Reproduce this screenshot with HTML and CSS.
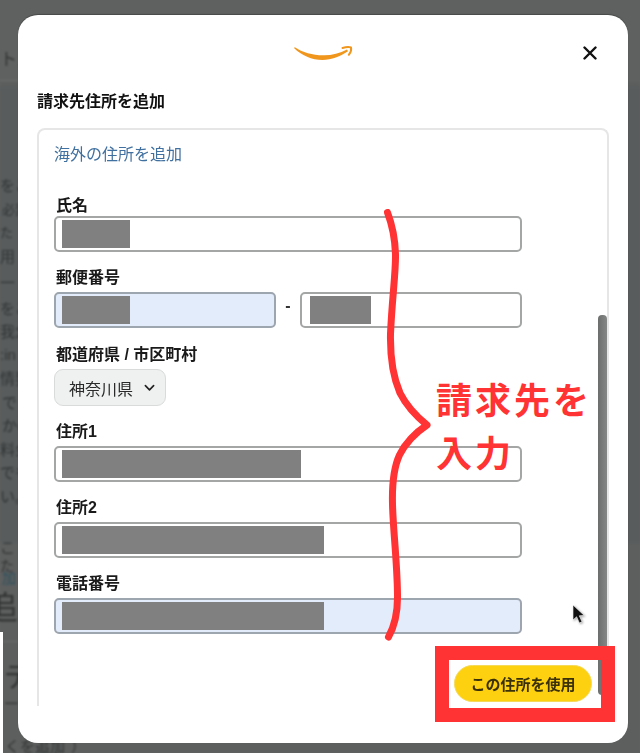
FILE: index.html
```html
<!DOCTYPE html>
<html lang="ja">
<head>
<meta charset="utf-8">
<title>請求先住所を追加</title>
<link rel="stylesheet" href="styles.css">
</head>
<body>
<div class="backdrop">
  <div class="bg-row r-top"></div>
  <div class="bg-row r-head"><span>トス</span></div>
  <div class="bg-rule r-gap1"></div>
  <div class="bg-row r-gap2"></div>
  <div class="bg-row r-text"><span>をこ</span></div>
  <div class="bg-row r-text small"><span class="in-2">必変</span></div>
  <div class="bg-row r-text small"><span>た</span></div>
  <div class="bg-row r-text"><span>用</span></div>
  <div class="bg-row r-tall"><span>一</span></div>
  <div class="bg-row r-text"><span>をこ</span></div>
  <div class="bg-row r-text"><span>我念</span></div>
  <div class="bg-row r-text"><span>:in</span></div>
  <div class="bg-row r-text"><span>情要</span></div>
  <div class="bg-row r-text"><span class="in-2">で</span></div>
  <div class="bg-row r-text"><span class="in-2">かの</span></div>
  <div class="bg-row r-text"><span>料金</span></div>
  <div class="bg-row r-text"><span>でも</span></div>
  <div class="bg-row r-text"><span>い。</span></div>
  <div class="bg-row r-gap4"></div>
  <div class="bg-row r-text"><span>こ</span></div>
  <div class="bg-row r-line"><span>た</span></div>
  <div class="bg-row r-line teal"><span class="in-2">加</span></div>
  <div class="bg-row r-big"><span class="in-big">追</span></div>
  <div class="bg-rule r-gap3"></div>
  <div class="bg-row r-big2"><span class="in-3">デ</span></div>
  <div class="bg-row r-text"><span class="in-3">ー</span></div>
  <div class="bg-foot"><span>くを追加</span><span>）</span></div>
</div>
<div class="white-strip"></div>

<div class="modal">
  <div class="modal-head">
    <span></span>
    <svg class="logo" viewBox="0 0 62 18" aria-label="amazon">
      <path class="logo-smile" d="M2 4C9.500 11.500 20 16 30.500 16C39.500 16 48.500 12.500 56 7.300L55 5.500C47.500 9.500 39.500 11.500 31 11.300C20.500 11 10.500 8.500 2.800 3.200Z"/>
      <path class="logo-arrow" d="M50.500 4C53.500 3 56.800 2.600 59 3.400C59.500 5.500 58.500 8.800 56.800 10.800"/>
    </svg>
    <svg class="close" viewBox="0 0 14 14" aria-label="閉じる"><path d="M1.500 1.500L12.500 12.500M12.500 1.500L1.500 12.500"/></svg>
  </div>
  <h2 class="title">請求先住所を追加</h2>
  <div class="card">
    <a class="link">海外の住所を追加</a>
    <form class="form">
      <label class="label first">氏名</label>
      <div class="field"><i class="mask w-68"></i></div>

      <label class="label">郵便番号</label>
      <div class="zip">
        <div class="field half filled"><i class="mask w-68"></i></div>
        <span class="dash">-</span>
        <div class="field half shifted"><i class="mask w-61"></i></div>
      </div>

      <label class="label gap41">都道府県 / 市区町村</label>
      <div class="select">神奈川県
        <svg class="chev" viewBox="0 0 12 8"><path d="M1.500 1.500L6 6L10.500 1.500"/></svg>
      </div>

      <label class="label">住所1</label>
      <div class="field"><i class="mask w-239"></i></div>

      <label class="label">住所2</label>
      <div class="field"><i class="mask w-262"></i></div>

      <label class="label">電話番号</label>
      <div class="field filled"><i class="mask w-262"></i></div>
    </form>
    <div class="foot"><button type="button" class="use">この住所を使用</button></div>
    <div class="scrollbar"></div>
  </div>
</div>

<svg class="brace" viewBox="0 0 60 440">
  <path d="M3.500 3.500C9 18 11 30 11.500 45C12 62 8 90 6.500 125C6 150 9 168 16 184C23 198 32 207 43 216C31 224 22 233 15.500 246C9.500 259 8 275 8.500 295C9 320 13 350 13.500 385C14 405 10 418 4.500 428"/>
</svg>
<div class="note">請求先を<br>入力</div>
<div class="redbox"></div>
<svg class="cursor" viewBox="0 0 14 22"><path d="M1 1L1 16L4.600 12.800L7.400 19L10 17.800L7.300 11.800L12.200 11.400Z"/></svg>
</body>
</html>
```
FILE: styles.css
```css
* { box-sizing: border-box; }
html, body { margin: 0; height: 753px; overflow: hidden; }
body {
  background: #606161;
  font-family: "Liberation Sans", "Noto Sans CJK JP", sans-serif;
  color: #111;
  position: relative;
}

.backdrop {
  display: flex;
  flex-direction: column;
  height: 753px;
  color: #323434;
  filter: blur(0.9px);
  background: linear-gradient(#5f6060 0 80px, #585c5c 90px 540px, #5d5f5f 545px);
}
.bg-row {
  display: flex;
  justify-content: flex-start;
  align-items: center;
  white-space: nowrap;
  font-size: 15px;
  flex: none;
}
.in-2 { margin-left: 2px; }
.in-3 { margin-left: 4px; }
.in-big { margin-left: -14px; }
.r-top { height: 45px; }
.r-head { height: 24px; font-size: 17px; }
.r-gap1 { height: 12px; width: 18px; border-bottom: 1px solid #6d6e6e; flex: none; }
.r-gap2 { height: 92px; }
.r-text { height: 23.500px; }
.r-tall { height: 28.500px; }
.small { font-size: 13px; }
.r-gap4 { height: 28px; }
.r-line { height: 12px; font-size: 14px; }
.teal { color: #2c4f5c; }
.r-big { height: 44px; font-size: 32px; }
.r-gap3 { height: 15px; width: 18px; margin-bottom: 17px; border-bottom: 1px solid #6d6e6e; flex: none; }
.r-big2 { height: 32px; font-size: 28px; }
.bg-foot {
  margin-top: auto;
  height: 13px;
  padding-left: 5px;
  font-size: 15px;
  line-height: 13px;
  display: flex;
  gap: 6px;
  white-space: nowrap;
}
.white-strip {
  position: absolute;
  left: 0;
  top: 632px;
  width: 3px;
  height: 121px;
  background: #fff;
}

.modal {
  position: absolute;
  left: 18px;
  top: 15px;
  width: 610px;
  height: 728px;
  background: #fff;
  border-radius: 20px;
  padding-top: 29px;
  box-shadow: 0 -1px 1px rgba(0,0,0,.25);
  filter: blur(0.3px);
}
.modal-head {
  display: grid;
  grid-template-columns: 1fr auto 1fr;
  height: 18px;
  padding: 0 31px;
}
.logo { width: 62px; height: 18px; display: block; }
.logo-smile { fill: #f0961c; }
.logo-arrow { fill: none; stroke: #f0961c; stroke-width: 2; stroke-linecap: round; stroke-linejoin: round; }
.close {
  width: 14px;
  height: 14px;
  margin-top: 2px;
  justify-self: end;
  fill: none;
  stroke: #111;
  stroke-width: 2.400;
  stroke-linecap: round;
}
.title {
  margin: 28px 0 14px 19px;
  font-size: 16px;
  line-height: 24px;
  font-weight: 700;
}
.card {
  position: relative;
  margin: 0 19px;
  height: 578px;
  border: 2px solid #e6e6e6;
  border-bottom: 0;
  border-radius: 8px 8px 0 0;
  padding: 13px 15px 0;
}
.link {
  display: block;
  font-size: 16px;
  line-height: 24px;
  color: #40709f;
}
.form { display: flex; flex-direction: column; align-items: flex-start; margin-top: 24px; }
.label {
  display: block;
  margin: 15px 0 4px 2px;
  font-size: 16px;
  line-height: 21px;
  font-weight: 700;
  color: #1a1a1a;
}
.label.first { margin-top: 4px; margin-bottom: 0; }
.label.gap41 { margin-top: 16px; }
.field {
  width: 468px;
  height: 36px;
  display: flex;
  align-items: center;
  padding-left: 6px;
  border: 2px solid #a4a6a6;
  border-radius: 5px;
  background: #fff;
}
.field.filled { background: #e2ecfb; border-color: #9da5ae; }
.field.half { width: 222px; }
.field.shifted { padding-left: 8px; }
.mask { display: block; height: 28px; background: #808080; }
.w-68 { width: 68px; }
.w-61 { width: 61px; }
.w-239 { width: 239px; }
.w-262 { width: 262px; }
.zip { display: flex; align-items: center; }
.dash { width: 24px; text-align: center; font-weight: 700; font-size: 16px; margin-top: -8px; color: #333; }
.select {
  width: 112px;
  height: 37px;
  display: flex;
  align-items: center;
  gap: 11px;
  padding-left: 14px;
  font-size: 16px;
  color: #2a2a2a;
  background: #eff1f1;
  border: 1px solid #d9dbdb;
  border-radius: 9px;
}
.chev { width: 11px; height: 8px; fill: none; stroke: #222; stroke-width: 1.800; stroke-linecap: round; stroke-linejoin: round; }
.foot { display: flex; justify-content: flex-end; margin-top: 31px; }
.use {
  width: 138px;
  height: 37px;
  padding: 0;
  border: 1px solid #f5da5a;
  border-radius: 19px;
  background: #fdd010;
  color: #3a3108;
  font: 700 15px "Liberation Sans", "Noto Sans CJK JP", sans-serif;
}
.scrollbar {
  position: absolute;
  left: 559px;
  top: 185px;
  width: 9px;
  height: 380px;
  border-radius: 4px;
  background: linear-gradient(90deg, #6c6d6d, #858686);
}

.brace {
  position: absolute;
  left: 384px;
  top: 209px;
  width: 60px;
  height: 440px;
  fill: none;
  stroke: #ff3333;
  stroke-width: 7;
  stroke-linecap: round;
  stroke-linejoin: round;
}
.note {
  position: absolute;
  left: 436px;
  top: 372px;
  font: 700 36px/53px "Noto Sans CJK JP", sans-serif;
  letter-spacing: 3px;
  color: #ff3333;
}
.redbox {
  position: absolute;
  left: 435px;
  top: 646px;
  width: 180px;
  height: 76px;
  border: 14px solid #ff3333;
}
.cursor {
  position: absolute;
  left: 572px;
  top: 604px;
  width: 14px;
  height: 22px;
  fill: #111;
  stroke: #fff;
  stroke-width: .6;
  filter: drop-shadow(1px 1px 1px rgba(0,0,0,.35));
}
```
